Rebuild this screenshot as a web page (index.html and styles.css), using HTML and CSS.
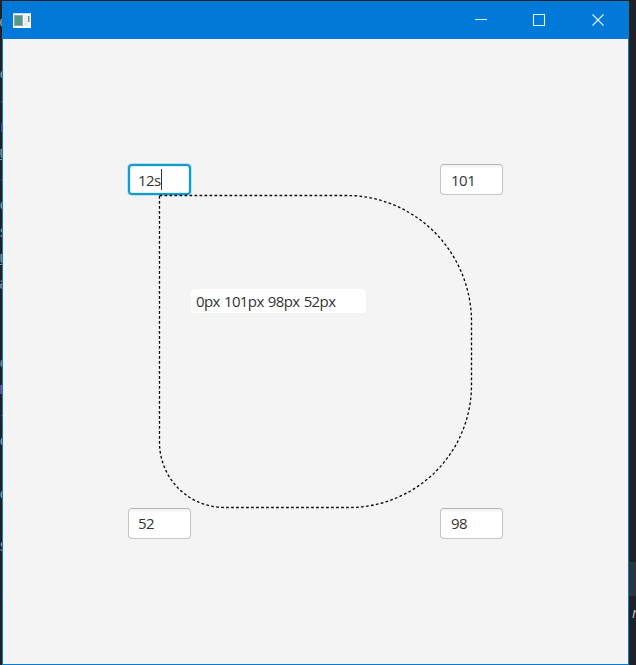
FILE: index.html
```html
<!DOCTYPE html>
<html lang="en">
<head>
<meta charset="utf-8">
<title>Border radius</title>
<link rel="stylesheet" href="styles.css">
</head>
<body>
<div class="desktop">
  <div class="editor-left" aria-hidden="true">
    <span>e</span><span></span><span>c</span><span>-</span><span>r</span><span class="link">u</span><span>-</span><span>c</span><span>s</span><span class="link">u</span><span>a</span><span></span><span></span><span>c</span><span class="key">n</span><span>-</span><span>c</span><span></span><span>c</span><span></span><span>s</span><span></span><span class="dim">(</span><span></span>
  </div>
  <main class="window">
    <header class="titlebar">
      <svg class="app-icon" width="18" height="15" viewBox="0 0 18 15">
        <rect width="18" height="15" fill="#f7fcff"/>
        <rect y="0" width="18" height="1" fill="#b9dcf3"/>
        <rect x="1.5" y="2.5" width="8" height="10" fill="#549986" stroke="#8da6b5"/>
        <rect x="11" y="2" width="4" height="11" fill="#eee8ef"/>
        <rect x="15" y="3" width="1.500" height="6" fill="#549986"/>
      </svg>
      <div class="controls">
        <svg width="58" height="38" viewBox="0 0 58 38"><path d="M23 18.5h12"/></svg>
        <svg width="58" height="38" viewBox="0 0 58 38"><path d="M23.5 13.5h11v11h-11z"/></svg>
        <svg width="59" height="38" viewBox="0 0 59 38"><path d="M24.500 13.500l11 11m0-11l-11 11"/></svg>
      </div>
    </header>
    <section class="content">
      <div class="editor">
        <svg class="shape" width="315" height="315" viewBox="0 0 315 315">
          <path d="M1.500 1.500H188.500A125 126.500 0 0 1 313.500 128V191A122.500 122.500 0 0 1 191 313.500H66.500A65 65 0 0 1 1.500 248.500Z"/>
        </svg>
        <div class="field top-left focused">12s<i class="caret"></i></div>
        <div class="field top-right">101</div>
        <div class="result">0px 101px 98px 52px</div>
        <div class="field bottom-left">52</div>
        <div class="field bottom-right">98</div>
      </div>
    </section>
  </main>
  <div class="editor-right" aria-hidden="true"><div class="active-line"></div><span>r</span></div>
</div>
</body>
</html>
```
FILE: styles.css
```css
* { box-sizing: border-box; }
body { margin: 0; overflow: hidden; }
.desktop {
  display: grid;
  grid-template-columns: 2px 627px 7px;
  width: 636px;
  height: 665px;
  padding-top: 1px;
  background: #202124;
  font-family: "Open Sans", "Noto Sans", sans-serif;
}
.editor-left {
  display: flex;
  flex-direction: column;
  padding-top: 8px;
  overflow: hidden;
  color: #8b98a5;
  font: 15px/26.2px "DejaVu Sans Mono", monospace;
}
.editor-left span { flex: 0 0 26.2px; text-indent: -1px; }
.link { text-decoration: underline; }
.key { color: #8169b8; }
.dim { color: #3d5670; }
.window {
  display: flex;
  flex-direction: column;
  height: 664px;
  border: 1px solid #087bcd;
  border-top: 0;
  background: #f4f4f4;
}
.titlebar {
  display: flex;
  align-items: center;
  justify-content: space-between;
  flex: 0 0 38px;
  padding-left: 10px;
  background: #0179d9;
}
.app-icon { display: block; }
.controls { display: flex; margin-right: 1px; }
.controls svg { display: block; fill: none; stroke: #dff6ff; stroke-width: 1.1; }
.content { display: grid; place-items: center; flex: 1; }
.editor {
  display: grid;
  grid-template-columns: 63px 249px 63px;
  grid-template-rows: 31px 313px 31px;
  width: 375px;
  height: 375px;
}
.shape {
  grid-area: 1 / 1 / 4 / 4;
  place-self: center;
  z-index: 1;
  pointer-events: none;
  fill: none;
  stroke: #050505;
  stroke-width: 1.3;
  stroke-dasharray: 2.7 2.3;
}
.field {
  display: flex;
  align-items: center;
  padding: 0 0 1px 10px;
  border: 1px solid #c5c5c5;
  border-top-color: #b7b7b7;
  border-radius: 4px;
  background: linear-gradient(#f0f0f0, #fff 4px);
  color: #333;
  font-size: 15px;
  line-height: 20px;
  letter-spacing: -.5px;
}
.focused {
  border: 2px solid #159bc8;
  padding: 0 0 0 8px;
  background: #fff;
  box-shadow: 0 0 0 1px #b5e5f3, inset 0 0 0 1px #d8f2fa;
  letter-spacing: -.6px;
}
.caret { width: 1px; height: 21px; background: #333; }
.top-left { grid-area: 1 / 1; }
.top-right { grid-area: 1 / 3; padding-top: 1px; padding-bottom: 0; }
.bottom-left { grid-area: 3 / 1; padding-left: 9px; }
.bottom-right { grid-area: 3 / 3; }
.result {
  grid-area: 2 / 2;
  width: 175px;
  height: 24px;
  margin-top: 94px;
  padding-left: 5px;
  border-radius: 4px;
  background: #fff;
  color: #333;
  font-size: 15px;
  line-height: 24px;
  letter-spacing: -.6px;
  word-spacing: .8px;
  white-space: nowrap;
}
.editor-right { padding-top: 561px; overflow: hidden; color: #bbb; }
.active-line { height: 34px; background: #2d343a; }
.editor-right span { display: block; padding-left: 2px; font: italic 14px/34px "DejaVu Sans Mono", monospace; }
```
